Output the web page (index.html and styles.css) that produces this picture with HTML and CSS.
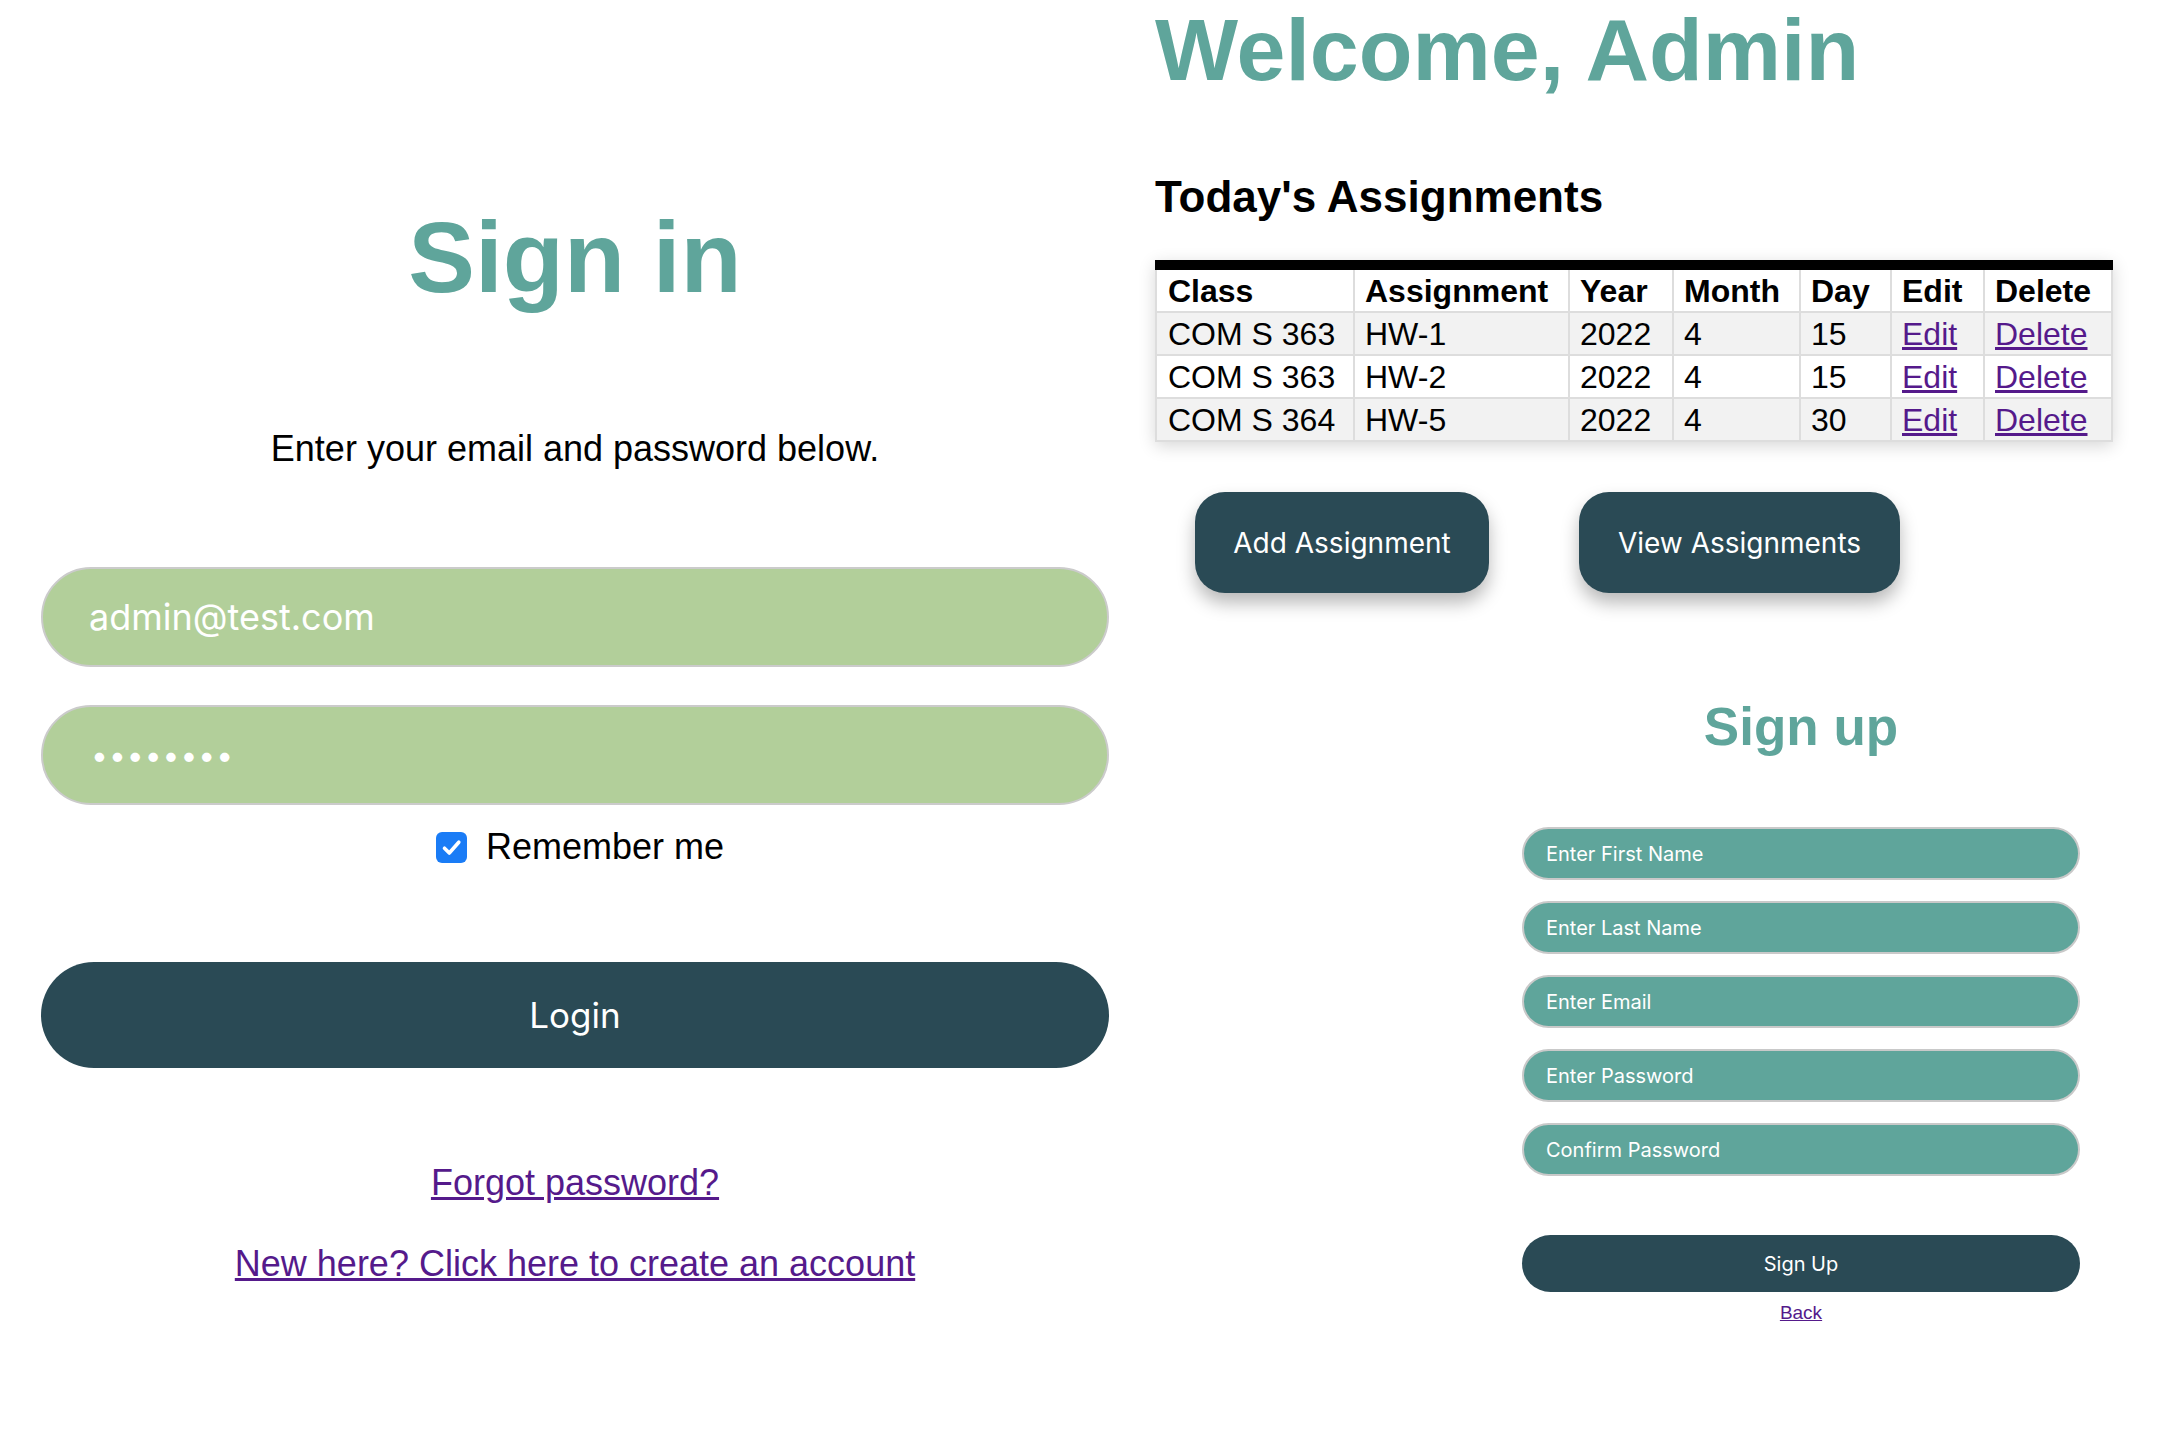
FILE: index.html
```html
<!DOCTYPE html>
<html lang="en">
<head>
<meta charset="utf-8">
<title>Assignments</title>
<link rel="stylesheet" href="styles.css">
</head>
<body>
<div class="page">
  <section class="signin">
    <h1 class="signin-title">Sign in</h1>
    <p class="signin-intro">Enter your email and password below.</p>
    <form class="signin-form">
      <input class="pill-input" type="email" value="admin@test.com">
      <input class="pill-input pw-input" type="password" value="password">
      <label class="remember">
        <span class="check"><svg width="31" height="31" viewBox="0 0 31 31"><path d="M8.5 16.2 L13.3 21 L22.8 10.2" fill="none" stroke="#fff" stroke-width="3.6" stroke-linecap="round" stroke-linejoin="round"/></svg></span>
        <span>Remember me</span>
      </label>
      <button class="login-btn" type="button">Login</button>
    </form>
    <a class="text-link forgot" href="#">Forgot password?</a>
    <a class="text-link create" href="#">New here? Click here to create an account</a>
  </section>

  <div class="right-col">
    <section class="dashboard">
      <h1 class="welcome">Welcome, Admin</h1>
      <h2 class="today">Today's Assignments</h2>
      <table class="assign-table">
        <thead>
          <tr>
            <th class="c-class">Class</th>
            <th class="c-assign">Assignment</th>
            <th class="c-year">Year</th>
            <th class="c-month">Month</th>
            <th class="c-day">Day</th>
            <th class="c-edit">Edit</th>
            <th class="c-del">Delete</th>
          </tr>
        </thead>
        <tbody>
          <tr>
            <td>COM S 363</td><td>HW-1</td><td>2022</td><td>4</td><td>15</td>
            <td><a class="tbl-link" href="#">Edit</a></td><td><a class="tbl-link" href="#">Delete</a></td>
          </tr>
          <tr>
            <td>COM S 363</td><td>HW-2</td><td>2022</td><td>4</td><td>15</td>
            <td><a class="tbl-link" href="#">Edit</a></td><td><a class="tbl-link" href="#">Delete</a></td>
          </tr>
          <tr>
            <td>COM S 364</td><td>HW-5</td><td>2022</td><td>4</td><td>30</td>
            <td><a class="tbl-link" href="#">Edit</a></td><td><a class="tbl-link" href="#">Delete</a></td>
          </tr>
        </tbody>
      </table>
      <div class="dash-actions">
        <button class="dash-btn add-btn" type="button">Add Assignment</button>
        <button class="dash-btn view-btn" type="button">View Assignments</button>
      </div>
    </section>

    <section class="signup">
      <form class="signup-form">
        <h2 class="signup-title">Sign up</h2>
        <div class="signup-fields">
          <input class="teal-input" type="text" placeholder="Enter First Name">
          <input class="teal-input" type="text" placeholder="Enter Last Name">
          <input class="teal-input" type="email" placeholder="Enter Email">
          <input class="teal-input" type="password" placeholder="Enter Password">
          <input class="teal-input" type="password" placeholder="Confirm Password">
        </div>
        <button class="signup-btn" type="button">Sign Up</button>
        <a class="back-link" href="#">Back</a>
      </form>
    </section>
  </div>
</div>
</body>
</html>
```

FILE: styles.css
```css
* { box-sizing: border-box; }

html, body {
  margin: 0;
  padding: 0;
  background: #ffffff;
}

body {
  font-family: "Liberation Sans", Arial, Helvetica, sans-serif;
  color: #000;
}

.page {
  display: flex;
  width: 2164px;
  height: 1442px;
  overflow: hidden;
}

/* ---------- Sign in ---------- */
.signin {
  flex: none;
  width: 1150px;
  display: flex;
  flex-direction: column;
  align-items: center;
}

.signin-title {
  margin: 207px 0 0;
  font-size: 100px;
  line-height: 100px;
  font-weight: 700;
  color: #5fa59b;
}

.signin-intro {
  margin: 124px 0 0;
  font-size: 36px;
  line-height: 36px;
}

.signin-form {
  margin-top: 100px;
  display: flex;
  flex-direction: column;
  align-items: center;
}

.pill-input {
  width: 1068px;
  height: 100px;
  border: 2px solid #cbcbcb;
  border-radius: 50px;
  background: #b2cf9a;
  padding: 0 0 0 46px;
  font-family: Inter, "Noto Sans", sans-serif;
  font-size: 36px;
  color: #ffffff;
  outline: none;
}

.pw-input {
  margin-top: 38px;
  padding-left: 48px;
  letter-spacing: 1px;
  font-size: 30px;
}

.remember {
  margin: 24px 0 0 10px;
  height: 36px;
  display: flex;
  align-items: center;
  gap: 19px;
  font-size: 36px;
  line-height: 36px;
}

.check {
  display: block;
  width: 31px;
  height: 31px;
  border-radius: 6px;
  background: #1a7cf6;
}

.check svg { display: block; }

.login-btn {
  margin-top: 97px;
  width: 1068px;
  height: 106px;
  border: none;
  border-radius: 53px;
  background: #2a4a55;
  color: #ffffff;
  font-family: Inter, "Noto Sans", sans-serif;
  font-size: 35px;
}

.text-link {
  color: #551a8b;
  text-decoration: underline;
  font-size: 36px;
  line-height: 36px;
}

.forgot { margin-top: 97px; }
.create { margin-top: 45px; }

/* ---------- Right column ---------- */
.right-col {
  flex: none;
  width: 1014px;
  display: flex;
  flex-direction: column;
}

.dashboard {
  height: 627px;
  padding-left: 5px;
  clip-path: inset(-40px -40px 0 -40px);
}

.welcome {
  margin: 6px 0 0;
  font-size: 88px;
  line-height: 88px;
  font-weight: 700;
  color: #5fa59b;
}

.today {
  margin: 81px 0 0;
  font-size: 44px;
  line-height: 44px;
  font-weight: 700;
}

.assign-table {
  margin-top: 41px;
  width: 958px;
  table-layout: fixed;
  border-collapse: separate;
  border-spacing: 0;
  border-top: 10px solid #000;
  box-shadow: 0 4px 16px rgba(0, 0, 0, 0.16);
  font-size: 32px;
}

.assign-table th,
.assign-table td {
  height: 43px;
  padding: 1px 0 0 10px;
  line-height: 40px;
  text-align: left;
  border-right: 2px solid #dddddd;
  border-bottom: 2px solid #dddddd;
  white-space: nowrap;
}

.assign-table th:first-child,
.assign-table td:first-child {
  border-left: 2px solid #dddddd;
  padding-left: 11px;
}

.assign-table th {
  font-weight: 700;
  background: #ffffff;
}

.assign-table tbody tr:nth-child(odd) td { background: #f2f2f2; }
.assign-table tbody tr:nth-child(even) td { background: #ffffff; }

.c-class { width: 200px; }
.c-assign { width: 215px; }
.c-year { width: 104px; }
.c-month { width: 127px; }
.c-day { width: 91px; }
.c-edit { width: 93px; }
.c-del { width: 128px; }

.tbl-link {
  color: #551a8b;
  text-decoration: underline;
}

.dash-actions {
  margin-top: 50px;
  padding-left: 40px;
  display: flex;
  gap: 90px;
}

.dash-btn {
  height: 101px;
  border: none;
  border-radius: 30px;
  background: #2a4a55;
  color: #ffffff;
  font-family: Inter, "Noto Sans", sans-serif;
  font-size: 28px;
  box-shadow: 0 10px 18px rgba(0, 0, 0, 0.28);
}

.add-btn { width: 294px; }
.view-btn { width: 321px; }

/* ---------- Sign up ---------- */
.signup {
  flex: 1;
  background: #ffffff;
  padding-left: 372px;
}

.signup-form {
  width: 558px;
  display: flex;
  flex-direction: column;
}

.signup-title {
  margin: 73px 0 0;
  font-size: 53px;
  line-height: 54px;
  font-weight: 700;
  color: #5fa59b;
  text-align: center;
}

.signup-fields {
  margin-top: 73px;
  display: flex;
  flex-direction: column;
  gap: 21px;
}

.teal-input {
  width: 558px;
  height: 53px;
  border: 2px solid #c9c9c9;
  border-radius: 27px;
  background: #5fa59b;
  padding: 0 0 0 22px;
  font-family: Inter, "Noto Sans", sans-serif;
  font-size: 20px;
  color: #ffffff;
  outline: none;
}

.teal-input::placeholder {
  color: #ffffff;
  opacity: 1;
}

.signup-btn {
  margin-top: 59px;
  width: 558px;
  height: 57px;
  border: none;
  border-radius: 29px;
  background: #2a4a55;
  color: #ffffff;
  font-family: Inter, "Noto Sans", sans-serif;
  font-size: 20px;
}

.back-link {
  margin-top: 11px;
  align-self: center;
  font-size: 19px;
  line-height: 19px;
  color: #551a8b;
  text-decoration: underline;
}
```
